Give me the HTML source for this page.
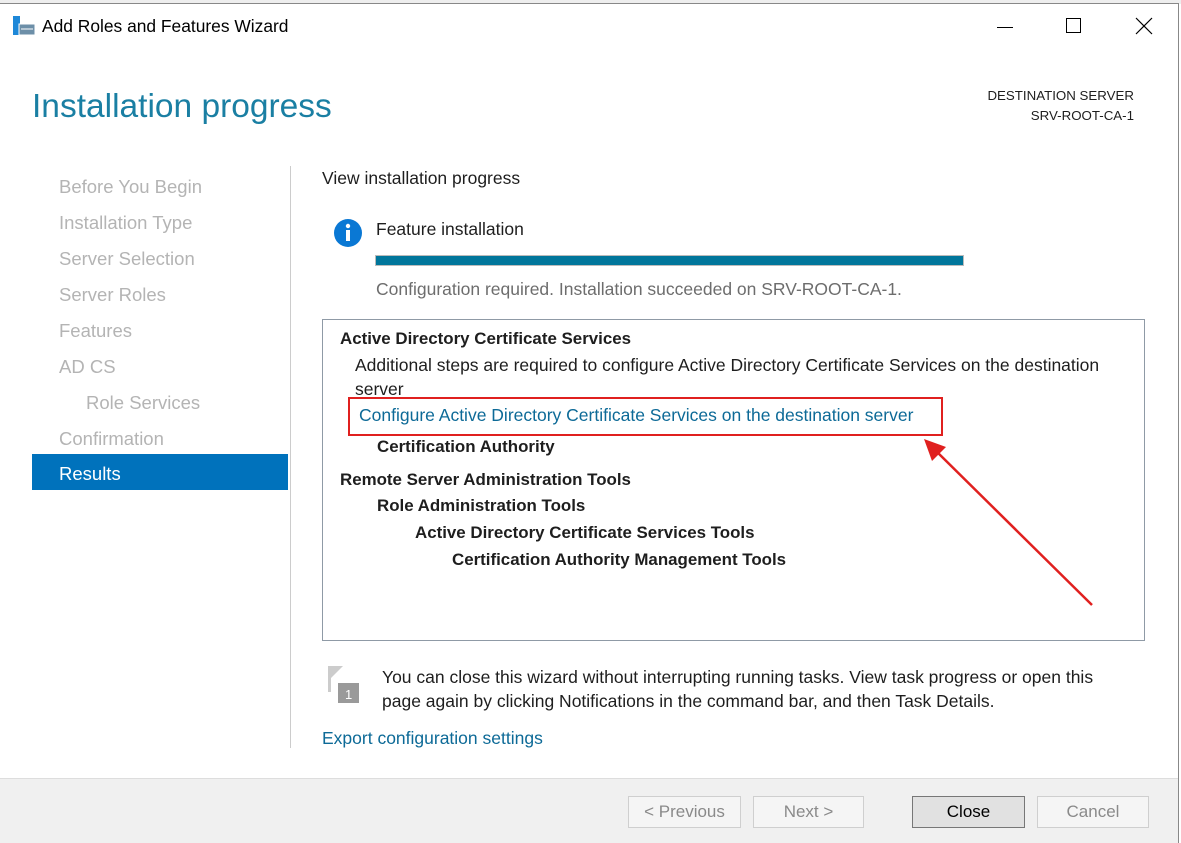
<!DOCTYPE html>
<html><head><meta charset="utf-8"><style>
*{margin:0;padding:0;box-sizing:border-box}
body{width:1181px;height:843px;overflow:hidden;background:#fff;font-family:"Liberation Sans",sans-serif;position:relative;color:#1e1e1e}
.a{position:absolute;white-space:nowrap}
.win{position:absolute;left:0;top:3px;width:1179px;height:840px;border:1px solid #888;border-left:none;background:#fff}
.side{font-size:18.5px;color:#b4b4b4}
.btn{position:absolute;top:796px;height:32px;border:1px solid #cfcfcf;background:#f5f5f5;color:#8a8a8a;font-size:17px;text-align:center;line-height:30px}
.b{font-weight:bold;font-size:16.9px}
.t{font-size:17.5px}
</style></head><body>
<div class="a" style="left:0;top:0;width:1181px;height:4px;background:#eee"></div>
<div class="win"></div>
<svg class="a" style="left:13px;top:16px" width="24" height="20"><rect x="0" y="0" width="7" height="19" fill="#1e88d8"/><rect x="6" y="8" width="16" height="11" fill="#6d8fa8" stroke="#fff" stroke-width="1"/><line x1="8" y1="13" x2="20" y2="13" stroke="#fff"/></svg>
<div class="a" style="left:42px;top:16px;font-size:17.4px;color:#000">Add Roles and Features Wizard</div>
<div class="a" style="left:997px;top:27px;width:16px;height:1px;background:#000"></div>
<div class="a" style="left:1066px;top:18px;width:15px;height:15px;border:1px solid #000"></div>
<svg class="a" style="left:1135px;top:17px" width="18" height="18"><path d="M1 1L17 17M17 1L1 17" stroke="#000" stroke-width="1.2"/></svg>
<div class="a" style="left:32px;top:88px;font-size:33.5px;color:#1a7fa3">Installation progress</div>
<div class="a" style="right:47px;top:86px;font-size:13.3px;color:#1e1e1e;text-align:right;line-height:20px">DESTINATION SERVER<br>SRV-ROOT-CA-1</div>
<div class="a side" style="left:59px;top:176px">Before You Begin</div>
<div class="a side" style="left:59px;top:212px">Installation Type</div>
<div class="a side" style="left:59px;top:248px">Server Selection</div>
<div class="a side" style="left:59px;top:284px">Server Roles</div>
<div class="a side" style="left:59px;top:320px">Features</div>
<div class="a side" style="left:59px;top:356px">AD CS</div>
<div class="a side" style="left:86px;top:392px">Role Services</div>
<div class="a side" style="left:59px;top:428px">Confirmation</div>
<div class="a" style="left:32px;top:454px;width:256px;height:36px;background:#0072bc"></div>
<div class="a" style="left:59px;top:463px;font-size:18.5px;color:#fff">Results</div>
<div class="a" style="left:290px;top:166px;width:1px;height:582px;background:#ccc"></div>
<div class="a t" style="left:322px;top:168px">View installation progress</div>
<svg class="a" style="left:333px;top:218px" width="30" height="30"><circle cx="15" cy="15" r="14" fill="#0a78d4"/><rect x="13" y="12" width="4" height="11" fill="#fff"/><circle cx="15" cy="8" r="2.2" fill="#fff"/></svg>
<div class="a t" style="left:376px;top:219px">Feature installation</div>
<div class="a" style="left:375px;top:255px;width:589px;height:11px;background:#00769b;border:1px solid #bbb"></div>
<div class="a t" style="left:376px;top:279px;color:#6d6d6d">Configuration required. Installation succeeded on SRV-ROOT-CA-1.</div>
<div class="a" style="left:322px;top:319px;width:823px;height:322px;border:1px solid #8f9aa6;background:#fff"></div>
<div class="a b" style="left:340px;top:329px">Active Directory Certificate Services</div>
<div class="a t" style="left:355px;top:353px;line-height:24px;white-space:normal;width:775px">Additional steps are required to configure Active Directory Certificate Services on the destination server</div>
<div class="a t" style="left:359px;top:405px;color:#0d6a97">Configure Active Directory Certificate Services on the destination server</div>
<div class="a" style="left:348px;top:397px;width:595px;height:39px;border:2.5px solid #e0201f"></div>
<div class="a b" style="left:377px;top:437px">Certification Authority</div>
<div class="a b" style="left:340px;top:470px">Remote Server Administration Tools</div>
<div class="a b" style="left:377px;top:496px">Role Administration Tools</div>
<div class="a b" style="left:415px;top:523px">Active Directory Certificate Services Tools</div>
<div class="a b" style="left:452px;top:550px">Certification Authority Management Tools</div>
<svg class="a" style="left:920px;top:435px" width="180" height="175"><line x1="172" y1="170" x2="12" y2="12" stroke="#e0201f" stroke-width="2.5"/><path d="M4 4L26 12L12 26Z" fill="#e0201f"/></svg>
<svg class="a" style="left:327px;top:666px" width="34" height="40"><rect x="1" y="0" width="3" height="26" fill="#ccc"/><path d="M4 0L16 0L4 12Z" fill="#ccc"/><rect x="11" y="17" width="21" height="20" fill="#9a9a9a"/><text x="18" y="33" font-size="13" fill="#fff" font-family="Liberation Sans">1</text></svg>
<div class="a t" style="left:382px;top:665px;line-height:24px">You can close this wizard without interrupting running tasks. View task progress or open this<br>page again by clicking Notifications in the command bar, and then Task Details.</div>
<div class="a t" style="left:322px;top:728px;color:#0d6a97">Export configuration settings</div>
<div class="a" style="left:0;top:778px;width:1178px;height:65px;background:#f0f0f0;border-top:1px solid #ddd"></div>
<div class="btn" style="left:628px;width:113px">&lt; Previous</div>
<div class="btn" style="left:753px;width:111px">Next &gt;</div>
<div class="btn" style="left:912px;width:113px;background:#e1e1e1;border-color:#777;color:#000">Close</div>
<div class="btn" style="left:1037px;width:112px">Cancel</div>
</body></html>
